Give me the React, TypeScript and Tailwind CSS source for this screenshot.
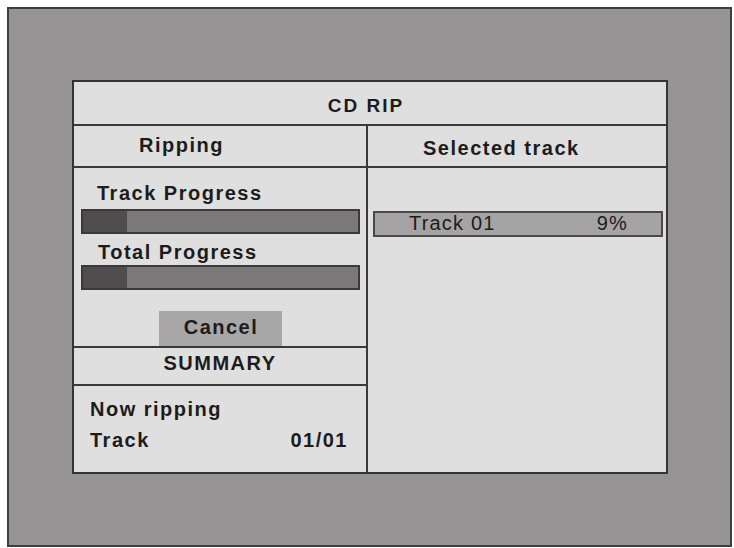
import React from 'react';

const font = { fontFamily: '"Liberation Sans", Arial, sans-serif' };

function ProgressBar({ percent }: { percent: number }) {
  return (
    <div className="ml-[7px] flex h-[25px] w-[279px] border-2 border-[#3a3839] bg-[#7a7879]">
      <div className="h-full bg-[#4e4c4d]" style={{ width: `${percent}%` }} />
    </div>
  );
}

export default function App() {
  return (
    <div className="h-[548px] w-[734px] bg-white pl-[7px] pt-[7px] text-[#1c1c1c]" style={font}>
      <div className="h-[540px] w-[725px] border-2 border-[#3f3d3e] bg-[#969495] pl-[63px] pt-[71px]">
        <div className="flex h-[394px] w-[596px] flex-col border-2 border-[#353334] bg-[#dfdfdf]">
          {/* title */}
          <div className="h-[44px] border-b-2 border-[#3a3839] pr-[8px] pt-[14px] text-center text-[19px] font-bold leading-none tracking-[2px]">
            CD RIP
          </div>

          <div className="flex flex-1">
            {/* left column: progress + summary */}
            <div className="flex w-[294px] flex-col border-r-2 border-[#3a3839]">
              <div className="h-[42px] border-b-2 border-[#3a3839] pl-[65px] pt-[9px] text-[20px] font-bold leading-none tracking-[1.5px]">
                Ripping
              </div>

              <div className="flex h-[180px] flex-col border-b-2 border-[#3a3839] pt-[15px]">
                <div className="pl-[23px] text-[20px] font-bold leading-none tracking-[1.5px]">Track Progress</div>
                <div className="mt-[6px]">
                  <ProgressBar percent={16} />
                </div>
                <div className="mt-[8px] pl-[24px] text-[20px] font-bold leading-none tracking-[1.5px]">Total Progress</div>
                <div className="mt-[3px]">
                  <ProgressBar percent={16} />
                </div>
                <button className="mx-auto mt-[21px] flex h-[35px] w-[123px] justify-center bg-[#a8a6a7] pl-[2px] pt-[6px] text-[20px] font-bold leading-none tracking-[1.5px]">
                  Cancel
                </button>
              </div>

              <div className="h-[38px] border-b-2 border-[#3a3839] pt-[5px] text-center text-[20px] font-bold leading-none tracking-[1.5px]">
                SUMMARY
              </div>

              <div className="flex flex-col pl-[16px] pr-[18px] pt-[13px] text-[20px] font-bold leading-none tracking-[1.5px]">
                <div>Now ripping</div>
                <div className="mt-[11px] flex justify-between">
                  <span>Track</span>
                  <span>01/01</span>
                </div>
              </div>
            </div>

            {/* right column: selected tracks */}
            <div className="flex flex-1 flex-col">
              <div className="h-[42px] border-b-2 border-[#3a3839] pl-[55px] pt-[12px] text-[20px] font-bold leading-none tracking-[1.5px]">
                Selected track
              </div>
              <div className="ml-[5px] mt-[43px] flex h-[26px] w-[290px] justify-between border-2 border-[#4a4849] bg-[#a5a3a4] pl-[34px] pr-[33px] text-[20px] leading-none tracking-[1.2px]">
                <span>Track 01</span>
                <span>9%</span>
              </div>
            </div>
          </div>
        </div>
      </div>
    </div>
  );
}
